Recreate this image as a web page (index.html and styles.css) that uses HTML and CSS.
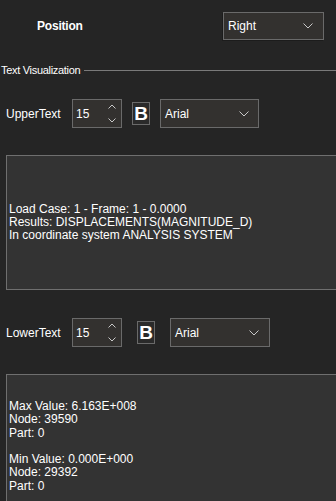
FILE: index.html
```
<!DOCTYPE html>
<html>
<head>
<meta charset="utf-8">
<link rel="stylesheet" href="styles.css">
</head>
<body>
<div class="page">
  <div class="row-top">
    <span class="pos-label">Position</span>
    <div class="combo combo-pos">
      <span class="combo-text">Right</span>
      <svg class="chev" width="10" height="6" viewBox="0 0 10 6"><path d="M0.5 0.5 L5 5 L9.5 0.5" fill="none" stroke="#c8c8c8" stroke-width="1"/></svg>
    </div>
  </div>

  <div class="group-head">
    <span class="group-title">Text Visualization</span>
    <span class="group-line"></span>
  </div>

  <div class="ctrl-row upper">
    <span class="ctrl-label">UpperText</span>
    <div class="spin">
      <span class="spin-val">15</span>
      <div class="spin-arrows">
        <svg width="8" height="5" viewBox="0 0 8 5"><path d="M0.5 4.5 L4 1 L7.5 4.5" fill="none" stroke="#c8c8c8" stroke-width="1"/></svg>
        <svg width="8" height="5" viewBox="0 0 8 5"><path d="M0.5 0.5 L4 4 L7.5 0.5" fill="none" stroke="#c8c8c8" stroke-width="1"/></svg>
      </div>
    </div>
    <div class="bold-btn">B</div>
    <div class="combo combo-font">
      <span class="combo-text">Arial</span>
      <svg class="chev" width="10" height="6" viewBox="0 0 10 6"><path d="M0.5 0.5 L5 5 L9.5 0.5" fill="none" stroke="#c8c8c8" stroke-width="1"/></svg>
    </div>
  </div>

  <div class="text-box upper-box">
    <div class="box-lines">
      <div>Load Case: 1 - Frame: 1 - 0.0000</div>
      <div>Results: DISPLACEMENTS(MAGNITUDE_D)</div>
      <div>In coordinate system ANALYSIS SYSTEM</div>
    </div>
  </div>

  <div class="ctrl-row lower">
    <span class="ctrl-label">LowerText</span>
    <div class="spin">
      <span class="spin-val">15</span>
      <div class="spin-arrows">
        <svg width="8" height="5" viewBox="0 0 8 5"><path d="M0.5 4.5 L4 1 L7.5 4.5" fill="none" stroke="#c8c8c8" stroke-width="1"/></svg>
        <svg width="8" height="5" viewBox="0 0 8 5"><path d="M0.5 0.5 L4 4 L7.5 0.5" fill="none" stroke="#c8c8c8" stroke-width="1"/></svg>
      </div>
    </div>
    <div class="bold-btn">B</div>
    <div class="combo combo-font2">
      <span class="combo-text">Arial</span>
      <svg class="chev" width="10" height="6" viewBox="0 0 10 6"><path d="M0.5 0.5 L5 5 L9.5 0.5" fill="none" stroke="#c8c8c8" stroke-width="1"/></svg>
    </div>
  </div>

  <div class="text-box lower-box">
    <div class="box-lines">
      <div>Max Value: 6.163E+008</div>
      <div>Node: 39590</div>
      <div>Part: 0</div>
      <div class="blank">&nbsp;</div>
      <div>Min Value: 0.000E+000</div>
      <div>Node: 29392</div>
      <div>Part: 0</div>
    </div>
  </div>
</div>
</body>
</html>
```
FILE: styles.css
```
html, body {
  margin: 0;
  padding: 0;
  background: #252525;
  overflow: hidden;
}
body {
  width: 336px;
  height: 501px;
  font-family: "Liberation Sans", Arial, sans-serif;
  color: #ffffff;
}
.page {
  display: flex;
  flex-direction: column;
}
.row-top {
  display: flex;
  align-items: center;
  height: 28px;
  margin-top: 12px;
}
.pos-label {
  padding-left: 37px;
  font-weight: bold;
  font-size: 12px;
  letter-spacing: -0.2px;
}
.combo {
  box-sizing: border-box;
  display: flex;
  align-items: center;
  justify-content: space-between;
  height: 29px;
  background: #33312f;
  border: 1px solid #6a6a6a;
  font-size: 12px;
}
.combo-pos {
  margin-left: auto;
  margin-right: 12px;
  width: 101px;
  height: 28px;
  padding: 0 10px 0 4px;
  box-shadow: -1px 1px 0 #1c1c1c;
}
.chev {
  display: block;
}
.group-head {
  display: flex;
  align-items: center;
  margin-top: 24px;
  height: 12px;
  padding-left: 1px;
}
.group-title {
  font-size: 11px;
  letter-spacing: -0.3px;
  white-space: nowrap;
}
.group-line {
  flex: 1;
  height: 1px;
  background: #7a7a7a;
  margin-left: 4px;
  margin-top: 1px;
}
.ctrl-row {
  display: flex;
  align-items: center;
  height: 29px;
  padding-left: 6px;
}
.upper {
  margin-top: 23px;
}
.lower {
  margin-top: 28px;
}
.ctrl-label {
  width: 66px;
  font-size: 12px;
}
.spin {
  box-sizing: border-box;
  width: 50px;
  height: 29px;
  display: flex;
  align-items: center;
  justify-content: space-between;
  background: #33312f;
  border: 1px solid #6a6a6a;
  padding: 0 5px 0 3px;
  font-size: 12px;
}
.spin-arrows {
  display: flex;
  flex-direction: column;
  justify-content: space-between;
  height: 19px;
}
.spin-arrows svg {
  display: block;
}
.bold-btn {
  box-sizing: border-box;
  width: 18px;
  height: 23px;
  border: 1px solid #6a6a6a;
  background: #2a2a2a;
  display: flex;
  align-items: center;
  justify-content: center;
  font-weight: bold;
  font-size: 19px;
  line-height: 1;
}
.upper .bold-btn {
  margin-left: 10px;
}
.lower .bold-btn {
  margin-left: 15px;
}
.combo-font {
  margin-left: 10px;
  width: 99px;
  padding: 0 9px 0 4px;
}
.combo-font2 {
  margin-left: 15px;
  width: 100px;
  padding: 0 10px 0 4px;
}
.text-box {
  box-sizing: border-box;
  margin-left: 6px;
  width: 340px;
  background: #333333;
  border: 1px solid #6f6f6f;
  display: flex;
  align-items: center;
  font-size: 12px;
  line-height: 13.3px;
  padding-left: 2px;
  flex-shrink: 0;
}
.upper-box {
  margin-top: 27px;
  height: 135px;
}
.lower-box {
  margin-top: 27px;
  height: 145px;
}
.box-lines {
  white-space: nowrap;
}
```
